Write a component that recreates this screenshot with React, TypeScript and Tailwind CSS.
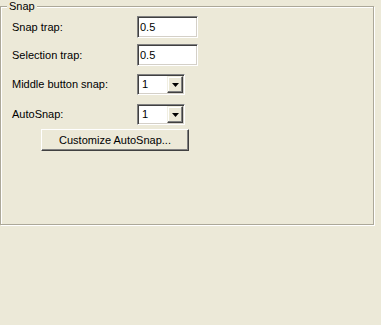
import React from 'react';

function TextBox({ value }: { value: string }) {
    return (
        <div className="w-[61px] h-[22px] bg-white border border-t-[#808080] border-l-[#808080] border-b-white border-r-white shadow-[inset_1px_1px_0_#404040,inset_-1px_-1px_0_#D4D0C8] flex items-center pl-[2px]">
            {value}
        </div>
    );
}

function ComboBox({ value }: { value: string }) {
    return (
        <div className="w-[48px] h-[21px] bg-white border border-t-[#808080] border-l-[#808080] border-b-white border-r-white shadow-[inset_1px_1px_0_#404040,inset_-1px_-1px_0_#D4D0C8] flex items-stretch p-[1px]">
            <span className="flex-1 flex items-center pl-[3px]">{value}</span>
            <span className="w-[16px] bg-[#ECE9D8] border border-t-[#F1EFE2] border-l-[#F1EFE2] border-b-[#404040] border-r-[#404040] shadow-[inset_-1px_-1px_0_#808080,inset_1px_1px_0_#fff] flex items-center justify-center">
                <svg width="7" height="4" viewBox="0 0 7 4">
                    <path d="M0 0h7L3.5 4z" fill="#000" />
                </svg>
            </span>
        </div>
    );
}

export default function App() {
    const rowLabel = "w-[125px]";

    return (
        <div className="w-[381px] h-[325px] bg-[#ECE9D8] font-['Liberation_Sans',Arial,sans-serif] text-[11px] text-black pt-[6px]">
            <div className="relative w-[374px] h-[219px] border border-[#ACA899] shadow-[1px_1px_0_#fff,inset_1px_1px_0_#fff]">
                <span className="absolute left-[6px] top-[-7px] px-[2px] bg-[#ECE9D8] leading-[13px]">Snap</span>
                <div className="flex flex-col pl-[11px] pt-[9px]">
                    <div className="flex items-center h-[22px]">
                        <span className={rowLabel}>Snap trap:</span>
                        <TextBox value="0.5" />
                    </div>
                    <div className="flex items-center h-[22px] mt-[6px]">
                        <span className={rowLabel}>Selection trap:</span>
                        <TextBox value="0.5" />
                    </div>
                    <div className="flex items-center h-[21px] mt-[8px]">
                        <span className={rowLabel}>Middle button snap:</span>
                        <ComboBox value="1" />
                    </div>
                    <div className="flex items-center h-[21px] mt-[9px]">
                        <span className={rowLabel}>AutoSnap:</span>
                        <ComboBox value="1" />
                    </div>
                    <button className="mt-[4px] ml-[29px] w-[148px] h-[22px] bg-[#ECE9D8] border border-t-white border-l-white border-b-[#404040] border-r-[#404040] shadow-[inset_-1px_-1px_0_#808080] flex items-center justify-center">
                        Customize AutoSnap...
                    </button>
                </div>
            </div>
        </div>
    );
}
